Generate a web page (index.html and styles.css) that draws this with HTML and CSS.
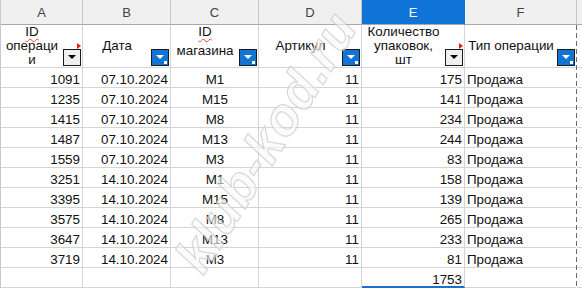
FILE: index.html
```html
<!DOCTYPE html>
<html lang="ru">
<head>
<meta charset="utf-8">
<title>Лист</title>
<link rel="stylesheet" href="styles.css">
</head>
<body>
<div class="sheet">
  <div class="ch">A</div>
  <div class="ch">B</div>
  <div class="ch">C</div>
  <div class="ch">D</div>
  <div class="ch sel">E</div>
  <div class="ch">F</div>
  <div class="ch rest"></div>

  <div class="th"><div class="lbl"><span class="sp">ID</span><span>операци</span><span>и</span></div><span class="flt plain"><i class="note"></i></span></div>
  <div class="th"><div class="lbl"><span>Дата</span></div><span class="flt"></span></div>
  <div class="th"><div class="lbl two"><span class="sp">ID</span><span>магазина</span></div><span class="flt"></span></div>
  <div class="th"><div class="lbl"><span>Артикул</span></div><span class="flt"></span></div>
  <div class="th"><div class="lbl"><span>Количество</span><span>упаковок,</span><span>шт</span></div><span class="flt plain"><i class="note"></i></span></div>
  <div class="th"><div class="lbl"><span>Тип операции</span></div><span class="flt"></span></div>
  <div class="c rest"></div>

  <div class="c r">1091</div><div class="c r">07.10.2024</div><div class="c m">М1</div><div class="c r">11</div><div class="c r">175</div><div class="c l">Продажа</div><div class="c rest"></div>
  <div class="c r">1235</div><div class="c r">07.10.2024</div><div class="c m">М15</div><div class="c r">11</div><div class="c r">141</div><div class="c l">Продажа</div><div class="c rest"></div>
  <div class="c r">1415</div><div class="c r">07.10.2024</div><div class="c m">М8</div><div class="c r">11</div><div class="c r">234</div><div class="c l">Продажа</div><div class="c rest"></div>
  <div class="c r">1487</div><div class="c r">07.10.2024</div><div class="c m">М13</div><div class="c r">11</div><div class="c r">244</div><div class="c l">Продажа</div><div class="c rest"></div>
  <div class="c r">1559</div><div class="c r">07.10.2024</div><div class="c m">М3</div><div class="c r">11</div><div class="c r">83</div><div class="c l">Продажа</div><div class="c rest"></div>
  <div class="c r">3251</div><div class="c r">14.10.2024</div><div class="c m">М1</div><div class="c r">11</div><div class="c r">158</div><div class="c l">Продажа</div><div class="c rest"></div>
  <div class="c r">3395</div><div class="c r">14.10.2024</div><div class="c m">М15</div><div class="c r">11</div><div class="c r">139</div><div class="c l">Продажа</div><div class="c rest"></div>
  <div class="c r">3575</div><div class="c r">14.10.2024</div><div class="c m">М8</div><div class="c r">11</div><div class="c r">265</div><div class="c l">Продажа</div><div class="c rest"></div>
  <div class="c r">3647</div><div class="c r">14.10.2024</div><div class="c m">М13</div><div class="c r">11</div><div class="c r">233</div><div class="c l">Продажа</div><div class="c rest"></div>
  <div class="c r">3719</div><div class="c r">14.10.2024</div><div class="c m">М3</div><div class="c r">11</div><div class="c r">81</div><div class="c l">Продажа</div><div class="c rest"></div>
  <div class="c"></div><div class="c"></div><div class="c"></div><div class="c"></div><div class="c r total">1753</div><div class="c"></div><div class="c rest"></div>

  <div class="pagebreak"></div>
  <div class="watermark">klub-kod.ru</div>
</div>
</body>
</html>
```

FILE: styles.css
```css
html, body {
  margin: 0;
  padding: 0;
  background: #ffffff;
  overflow: hidden;
}

.sheet {
  position: relative;
  width: 582px;
  height: 288px;
  display: grid;
  grid-template-columns: 82px 88px 88px 103px 103px 112px 1fr;
  grid-template-rows: 25px 43px repeat(11, 20px);
  border-left: 1px solid #c8c8c8;
  box-sizing: border-box;
  font-family: "Liberation Sans", Arial, sans-serif;
  font-size: 13.4px;
  color: #111;
  overflow: hidden;
}

.ch {
  box-sizing: border-box;
  background: #f0f0f0;
  border-right: 1px solid #c6c6c6;
  border-bottom: 1px solid #a9a9a9;
  color: #444;
  font-size: 13px;
  display: flex;
  align-items: center;
  justify-content: center;
  padding-top: 1px;
}

.ch.sel {
  background: #0f74d6;
  color: #ffffff;
  border-right-color: #0f74d6;
}

.ch.rest {
  border-right: none;
}

.th {
  box-sizing: border-box;
  border-right: 1px solid #d4d4d4;
  border-bottom: 1px solid #d4d4d4;
  display: flex;
  align-items: flex-end;
}

.lbl {
  flex: 1;
  align-self: stretch;
  display: flex;
  flex-direction: column;
  justify-content: center;
  align-items: center;
  line-height: 14px;
  text-align: center;
  white-space: nowrap;
}

.lbl.two {
  justify-content: flex-start;
  gap: 5px;
}

.sp {
  text-decoration: underline wavy #e0443a;
  text-decoration-thickness: 1px;
  text-underline-offset: 2px;
}

.flt {
  position: relative;
  box-sizing: border-box;
  width: 18px;
  height: 17px;
  margin: 0 1px 1px 0;
  border: 1px solid #1b1b1b;
  background: #1474d4;
  flex: none;
}

.flt::before {
  content: "";
  position: absolute;
  left: 4px;
  top: 5px;
  border-left: 4px solid transparent;
  border-right: 4px solid transparent;
  border-top: 4px solid #ffffff;
}

.flt::after {
  content: "";
  position: absolute;
  right: 1px;
  bottom: 1px;
  width: 3px;
  height: 3px;
  background: #ffffff;
}

.flt.plain {
  background: #f0f0f0;
}

.flt.plain::before {
  border-top-color: #000000;
}

.flt.plain::after {
  display: none;
}

.note {
  position: absolute;
  right: -1px;
  top: -7px;
  width: 0;
  height: 0;
  border-top: 3px solid transparent;
  border-bottom: 3px solid transparent;
  border-left: 4px solid #e31b1b;
}

.c {
  box-sizing: border-box;
  border-right: 1px solid #d4d4d4;
  border-bottom: 1px solid #d4d4d4;
  line-height: 16px;
  padding: 4px 2px 0 3px;
  white-space: nowrap;
  overflow: hidden;
}

.c.rest {
  border-right: none;
}

.r { text-align: right; }
.m { text-align: center; }
.l { text-align: left; padding-left: 2px; }

.total {
  border-bottom: 2px solid #1c6fcc;
}

.pagebreak {
  position: absolute;
  left: 575px;
  top: 25px;
  width: 1px;
  height: 263px;
  background: repeating-linear-gradient(to bottom, #6a6a6a 0 5px, #ffffff 5px 8px);
}

.watermark {
  position: absolute;
  left: 110px;
  top: 114px;
  width: 310px;
  text-align: center;
  font-family: "Liberation Sans", Arial, sans-serif;
  font-weight: bold;
  font-style: italic;
  font-size: 52px;
  line-height: 56px;
  letter-spacing: 1px;
  color: rgba(248, 248, 248, 0.6);
  -webkit-text-stroke: 1.2px rgba(200, 200, 200, 0.7);
  transform: rotate(-58deg);
  transform-origin: 50% 50%;
  pointer-events: none;
  white-space: nowrap;
}
```
